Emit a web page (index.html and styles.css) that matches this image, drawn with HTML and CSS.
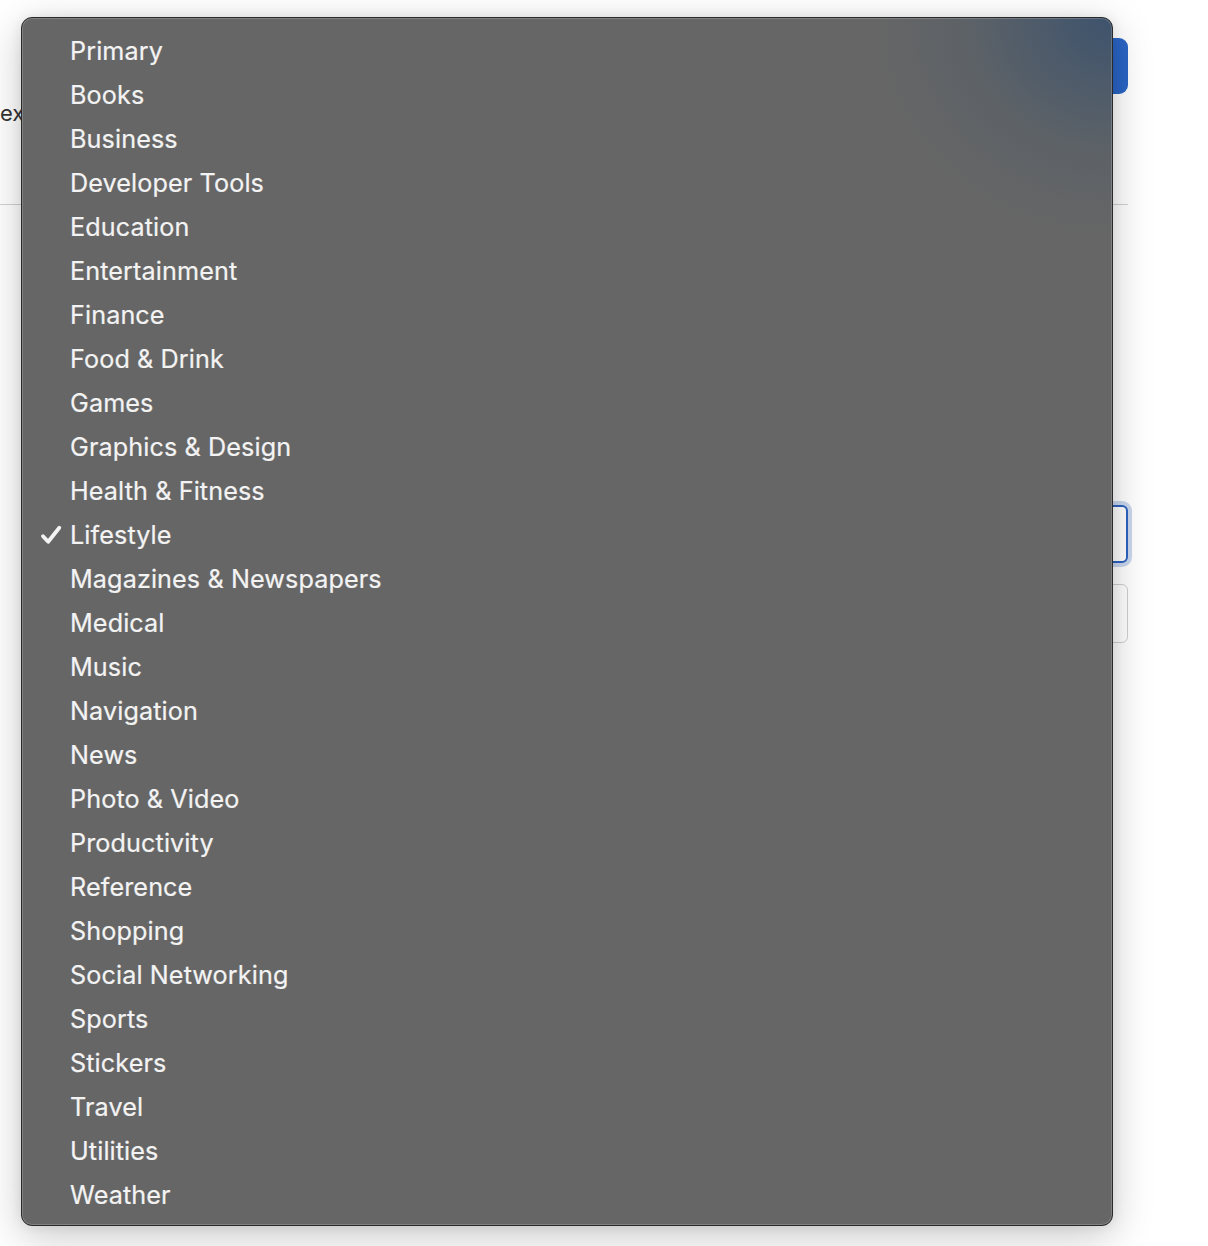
FILE: index.html
```html
<!DOCTYPE html>
<html>
<head>
<meta charset="utf-8">
<link rel="stylesheet" href="styles.css">
</head>
<body>
<div class="page">
  <div class="header">
    <span class="label">ex</span>
    <button class="primary-btn"></button>
  </div>
  <div class="divider"></div>
  <div class="fields">
    <div class="field focused"></div>
    <div class="field"></div>
  </div>
</div>

<div class="menu">
  <ul class="menu-list">
    <li class="item">Primary</li>
    <li class="item">Books</li>
    <li class="item">Business</li>
    <li class="item">Developer Tools</li>
    <li class="item">Education</li>
    <li class="item">Entertainment</li>
    <li class="item">Finance</li>
    <li class="item">Food &amp; Drink</li>
    <li class="item">Games</li>
    <li class="item">Graphics &amp; Design</li>
    <li class="item">Health &amp; Fitness</li>
    <li class="item checked"><svg class="check" viewBox="0 0 22 20" width="22" height="20"><path d="M3 11.2 L8.2 16.8 L19.3 2.8" fill="none" stroke="#f4f4f4" stroke-width="3.8" stroke-linecap="round" stroke-linejoin="round"/></svg>Lifestyle</li>
    <li class="item">Magazines &amp; Newspapers</li>
    <li class="item">Medical</li>
    <li class="item">Music</li>
    <li class="item">Navigation</li>
    <li class="item">News</li>
    <li class="item">Photo &amp; Video</li>
    <li class="item">Productivity</li>
    <li class="item">Reference</li>
    <li class="item">Shopping</li>
    <li class="item">Social Networking</li>
    <li class="item">Sports</li>
    <li class="item">Stickers</li>
    <li class="item">Travel</li>
    <li class="item">Utilities</li>
    <li class="item">Weather</li>
  </ul>
</div>
</body>
</html>
```

FILE: styles.css
```css
html, body {
  margin: 0;
  padding: 0;
  background: #ffffff;
  font-family: Inter, "Noto Sans", "Liberation Sans", sans-serif;
}

.page {
  width: 1128px;
  padding-top: 38px;
}

.header {
  display: flex;
  justify-content: space-between;
  align-items: flex-start;
  height: 166px;
}

.label {
  margin-top: 62px;
  font-size: 22px;
  color: #333;
  line-height: 26px;
}

.primary-btn {
  width: 120px;
  height: 56px;
  border: none;
  border-radius: 9px;
  background: #2a65c6;
  padding: 0;
}

.divider {
  height: 1px;
  background: #d2d2d2;
}

.fields {
  display: flex;
  flex-direction: column;
  align-items: flex-end;
  padding-top: 300px;
  gap: 21px;
}

.field {
  width: 300px;
  height: 59px;
  box-sizing: border-box;
  border: 1.5px solid #d0d0d0;
  border-radius: 6px;
  background: #fff;
}

.field.focused {
  height: 58px;
  border: 2px solid #2d63c0;
  box-shadow: 0 0 0 4px #c9d7ee;
}

.menu {
  position: absolute;
  left: 21px;
  top: 17px;
  width: 1092px;
  height: 1209px;
  box-sizing: border-box;
  border: 1px solid #2a2a2a;
  border-radius: 11px;
  background:
    radial-gradient(ellipse 240px 220px at 100% 0%, rgba(55, 80, 110, 0.85), rgba(75, 90, 105, 0.35) 60%, rgba(102, 102, 102, 0) 100%),
    #666666;
  box-shadow: inset 0 0 0 1px rgba(255, 255, 255, 0.18), 0 10px 40px rgba(0, 0, 0, 0.22), 0 0 12px rgba(0, 0, 0, 0.08);
  padding: 11px 0 8px;
}

.menu-list {
  list-style: none;
  margin: 0;
  padding: 0;
}

.item {
  position: relative;
  height: 44px;
  line-height: 44px;
  padding-left: 48px;
  font-size: 25.2px;
  color: #f3f3f3;
  letter-spacing: 0.1px;
  -webkit-text-stroke: 0.2px #f3f3f3;
}

.check {
  position: absolute;
  left: 18px;
  top: 12px;
}
```
